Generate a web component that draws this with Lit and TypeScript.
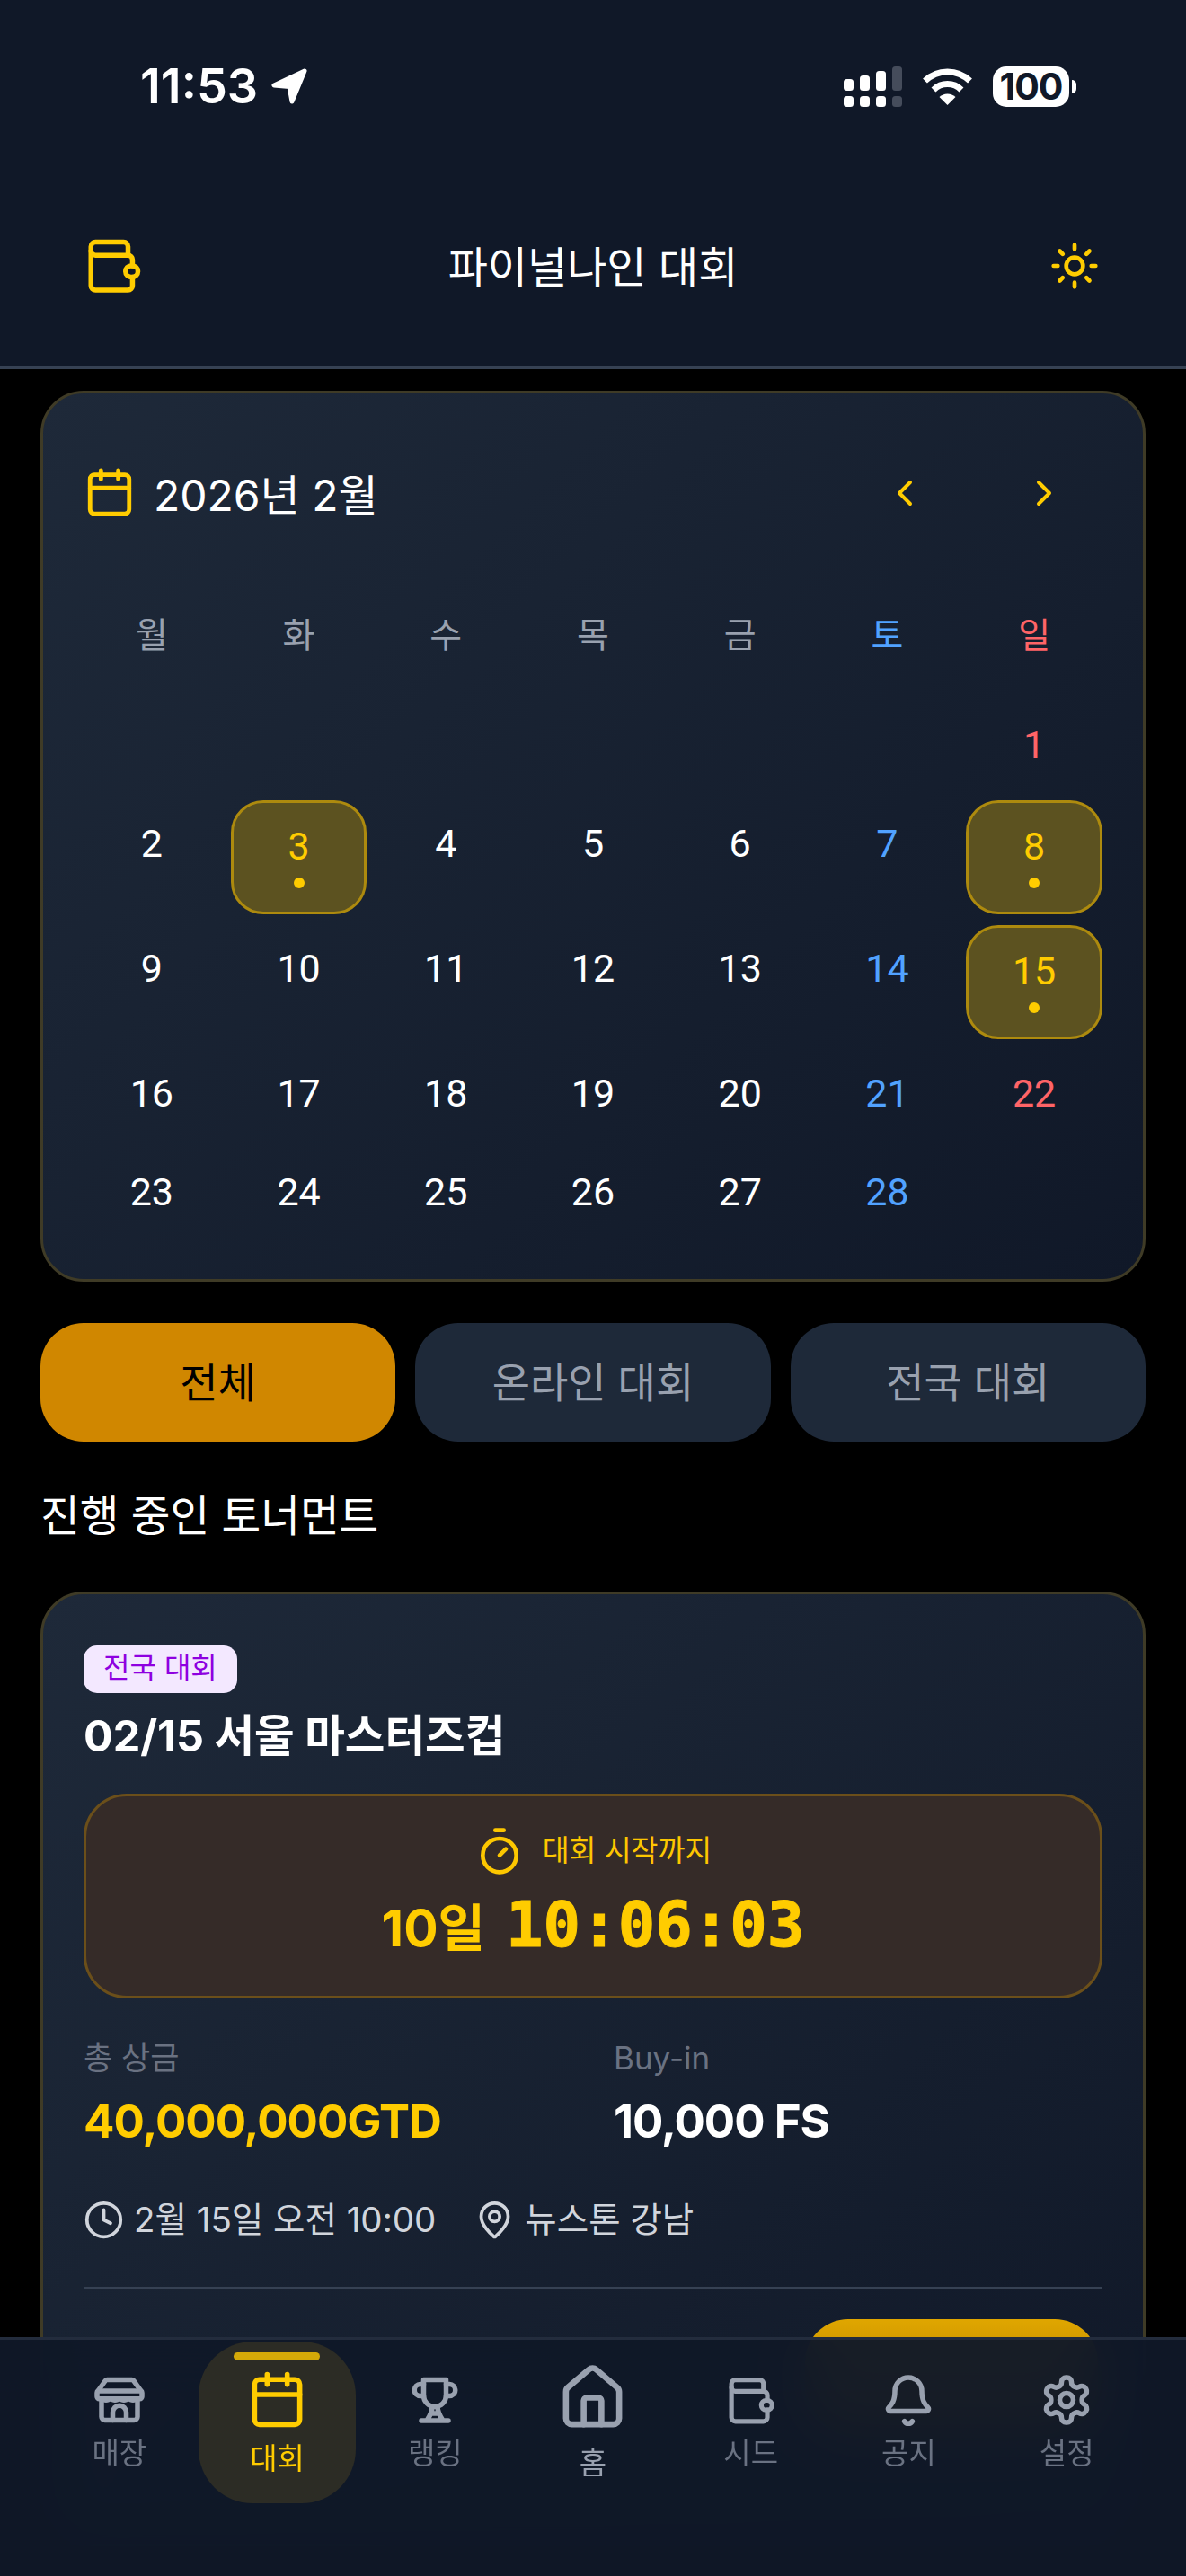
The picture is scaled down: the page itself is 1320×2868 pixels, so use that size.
import {css, html, LitElement, svg, nothing} from 'lit';
import {customElement} from 'lit/decorators.js';

const icon = (size: number, sw: number, body: unknown) => html`
  <svg class="ico" width=${size} height=${size} viewBox="0 0 24 24" fill="none" stroke="currentColor"
    stroke-width=${sw} stroke-linecap="round" stroke-linejoin="round">${body}</svg>`;

const walletPaths = svg`
  <path d="M3 6V20a1.8 1.8 0 0 0 1.8 1.8H18a1.8 1.8 0 0 0 1.8-1.8v-3.5"/>
  <path d="M19.8 12V9.5A1.8 1.8 0 0 0 18 7.7H4.8A1.8 1.8 0 0 1 3 6V4.2A1.8 1.8 0 0 1 4.8 2.4h11.4A1.8 1.8 0 0 1 18 4.2v3.5"/>
  <rect x="17" y="12" width="5" height="4.5" rx="2.2"/>`;
const calendarPaths = svg`
  <path d="M8 2v4M16 2v4M3 10h18"/><rect x="3" y="4" width="18" height="18" rx="2"/>`;
const storePaths = svg`
  <path d="M6.5 3h11a1 1 0 0 1 .8.4L21.6 8a1 1 0 0 1 .4.8V10.5a1 1 0 0 1-1 1H3a1 1 0 0 1-1-1V8.8a1 1 0 0 1 .4-.8L5.7 3.4A1 1 0 0 1 6.5 3z"/>
  <path d="M2.5 8h19"/>
  <path d="M4 11.5a2.6 2.6 0 0 0 4 0a2.6 2.6 0 0 0 4 0a2.6 2.6 0 0 0 4 0a2.6 2.6 0 0 0 4 0" stroke-width="1.6"/>
  <path d="M4 12v7.5A1.5 1.5 0 0 0 5.5 21h13a1.5 1.5 0 0 0 1.5-1.5V12"/>
  <path d="M9 21v-3.5a3 3 0 0 1 6 0V21"/>`;
const trophyPaths = svg`
  <path d="M7 3h10v7a5 5 0 0 1-10 0z"/>
  <path d="M7 5H5.5a2.6 2.6 0 0 0 0 5.2H7M17 5h1.5a2.6 2.6 0 0 1 0 5.2H17"/>
  <path d="M10.8 15c0 2.5-1 4-2.3 6M13.2 15c0 2.5 1 4 2.3 6M6 21.2h12M10.5 18h3"/>`;
const homePaths = svg`
  <path d="M15 21v-8a1 1 0 0 0-1-1h-4a1 1 0 0 0-1 1v8"/>
  <path d="M3 10a2 2 0 0 1 .709-1.528l7-5.999a2 2 0 0 1 2.582 0l7 5.999A2 2 0 0 1 21 10v9a2 2 0 0 1-2 2H5a2 2 0 0 1-2-2z"/>`;
const bellPaths = svg`
  <path d="M10.268 21.5a2 2 0 0 0 3.464 0"/>
  <path d="M3.262 15.326A1 1 0 0 0 4 17h16a1 1 0 0 0 .74-1.673C19.41 13.956 18 12.499 18 8A6 6 0 0 0 6 8c0 4.499-1.411 5.956-2.738 7.326"/>`;
const gearPaths = svg`
  <path d="M12.22 2h-.44a2 2 0 0 0-2 2v.18a2 2 0 0 1-1 1.73l-.43.25a2 2 0 0 1-2 0l-.15-.08a2 2 0 0 0-2.73.73l-.22.38a2 2 0 0 0 .73 2.73l.15.1a2 2 0 0 1 1 1.72v.51a2 2 0 0 1-1 1.74l-.15.09a2 2 0 0 0-.73 2.73l.22.38a2 2 0 0 0 2.73.73l.15-.08a2 2 0 0 1 2 0l.43.25a2 2 0 0 1 1 1.73V20a2 2 0 0 0 2 2h.44a2 2 0 0 0 2-2v-.18a2 2 0 0 1 1-1.73l.43-.25a2 2 0 0 1 2 0l.15.08a2 2 0 0 0 2.73-.73l.22-.39a2 2 0 0 0-.73-2.73l-.15-.08a2 2 0 0 1-1-1.74v-.5a2 2 0 0 1 1-1.74l.15-.09a2 2 0 0 0 .73-2.73l-.22-.38a2 2 0 0 0-2.73-.73l-.15.08a2 2 0 0 1-2 0l-.43-.25a2 2 0 0 1-1-1.73V4a2 2 0 0 0-2-2z"/>
  <circle cx="12" cy="12" r="3"/>`;
const sunPaths = svg`
  <circle cx="12" cy="12" r="4"/>
  <path d="M12 2v2M12 20v2M4.93 4.93l1.41 1.41M17.66 17.66l1.41 1.41M2 12h2M20 12h2M6.34 17.66l-1.41 1.41M19.07 4.93l-1.41 1.41"/>`;

const WEEK = ['월', '화', '수', '목', '금', '토', '일'];
// leading blanks so that the 1st falls on Sunday
const DAYS: (number | null)[] = [null, null, null, null, null, null,
  ...Array.from({length: 28}, (_, i) => i + 1)];
const EVENTS = [3, 8, 15];
const RED = [1, 22];

const NAV = [
  {label: '매장', size: 60, sw: 2.2, body: storePaths, cls: ''},
  {label: '대회', size: 67, sw: 2, body: calendarPaths, cls: 'active'},
  {label: '랭킹', size: 60, sw: 2.2, body: trophyPaths, cls: ''},
  {label: '홈', size: 79, sw: 2, body: homePaths, cls: 'home'},
  {label: '시드', size: 57, sw: 2.2, body: walletPaths, cls: 'seed'},
  {label: '공지', size: 60, sw: 2.2, body: bellPaths, cls: ''},
  {label: '설정', size: 60, sw: 2.2, body: gearPaths, cls: ''},
];

@customElement('app-root')
export class AppRoot extends LitElement {
  static override styles = css`
    :host {
      display: block;
      position: relative;
      width: 1320px;
      height: 2868px;
      overflow: hidden;
      background: #000;
      color: #fff;
      font-family: Inter, "Noto Sans CJK KR", sans-serif;
    }

    .ico { display: block; flex: none; }

    .top {
      height: 408px;
      background: #101828;
      border-bottom: 3px solid #364153;
      display: flex;
      flex-direction: column;
    }

    .status {
      height: 192px;
      display: flex;
      align-items: center;
      padding: 0 122px 0 156px;
      box-sizing: border-box;
      justify-content: space-between;
    }

    .clock {
      display: flex;
      align-items: center;
      gap: 14px;
      font-size: 54px;
      font-weight: 600;
      line-height: 60px;
    }

    .sys { display: flex; align-items: center; gap: 22px; }

    .battery {
      display: flex;
      align-items: center;
      gap: 3px;
    }

    .battery-body {
      width: 85px;
      height: 45px;
      border-radius: 15px;
      background: #fff;
      color: #101828;
      font-size: 41px;
      font-weight: 700;
      line-height: 45px;
      text-align: center;
      letter-spacing: -1px;
    }

    .battery-nub {
      width: 5px;
      height: 15px;
      border-radius: 0 6px 6px 0;
      background: #fff;
    }

    .bar {
      flex: 1;
      display: flex;
      align-items: center;
      justify-content: space-between;
      padding: 0 96px 8px 93px;
      color: #ffcc00;
    }

    .bar h1 {
      margin: 0 7px 4px 0;
      font-size: 48px;
      font-weight: 400;
      color: #fff;
    }

    main {
      padding: 24px 45px 0;
      display: flex;
      flex-direction: column;
    }

    .panel {
      border: 3px solid #3f3b26;
      border-radius: 48px;
      background: linear-gradient(135deg, #1e2939, #101828);
    }

    .cal { padding: 45px 45px 47px; }

    .cal-head {
      height: 130px;
      display: flex;
      align-items: center;
      color: #ffcc00;
    }

    .cal-title {
      flex: 1;
      margin-left: 20px;
      font-size: 48px;
      color: #fff;
    }

    .chev { display: flex; gap: 107px; padding: 2px 41px 0 0; }

    .grid {
      display: grid;
      grid-template-columns: repeat(7, 1fr);
      column-gap: 12px;
      row-gap: 12px;
      align-items: start;
    }

    .week {
      margin: 64px 0 44px;
    }

    .week span {
      text-align: center;
      font-size: 39px;
      line-height: 60px;
      color: #99a1af;
    }

    .sat { color: #51a2ff !important; }
    .sun { color: #ff6467 !important; }

    .day {
      height: 98px;
      box-sizing: border-box;
      padding-top: 24px;
      text-align: center;
      font-size: 43px;
      line-height: 48px;
      font-family: Roboto, sans-serif;
    }

    .day.event {
      height: 127px;
      padding-top: 24px;
      border: 3px solid #ad8a0e;
      border-radius: 36px;
      background: #5c5220;
      color: #ffcc00;
    }

    .dot {
      width: 12px;
      height: 12px;
      margin: 11px auto 0;
      border-radius: 50%;
      background: #ffcc00;
    }

    .tabs {
      margin-top: 46px;
      display: grid;
      grid-template-columns: repeat(3, 1fr);
      gap: 22px;
    }

    .tabs div {
      height: 132px;
      box-sizing: border-box;
      padding-bottom: 6px;
      border-radius: 48px;
      background: #1e2939;
      color: #99a1af;
      font-size: 46px;
      font-weight: 400;
      display: flex;
      align-items: center;
      justify-content: center;
    }

    .tabs .on { background: #d08700; color: #000; }

    h2 {
      margin: 51px 0 52px;
      font-size: 47.5px;
      line-height: 64px;
      font-weight: 400;
    }

    .game { padding: 57px 45px 0; height: 1000px; }

    .tag {
      display: inline-block;
      padding: 0 22px;
      height: 53px;
      line-height: 50px;
      border-radius: 15px;
      background: #f3e8ff;
      color: #8e00e0;
      font-size: 32px;
      font-weight: 400;
      vertical-align: top;
    }

    .name {
      margin: 10px 0 26px;
      font-size: 48.5px;
      line-height: 76px;
      font-weight: 700;
    }

    .count {
      height: 228px;
      box-sizing: border-box;
      border: 3px solid #6b4f1a;
      border-radius: 48px;
      background: #352b28;
      color: #ffcc00;
      display: flex;
      flex-direction: column;
      align-items: center;
      padding-top: 33px;
      gap: 12px;
    }

    .count-top {
      display: flex;
      align-items: center;
      gap: 20px;
      font-size: 32.5px;
      line-height: 56px;
      color: #fdc700;
    }

    .count-time {
      display: flex;
      align-items: baseline;
      gap: 23px;
      font-size: 57px;
      font-weight: 700;
      line-height: 84px;
    }

    .mono {
      font-family: "DejaVu Sans Mono", monospace;
      font-size: 69px;
      -webkit-text-stroke: 1px #ffcc00;
    }

    .facts {
      margin-top: 36px;
      display: grid;
      grid-template-columns: 1fr 1fr;
      column-gap: 46px;
    }

    .facts small {
      display: block;
      font-size: 35px;
      line-height: 60px;
      color: #6a7282;
    }

    .facts b {
      display: block;
      margin-top: 6px;
      font-size: 51px;
      line-height: 70px;
      font-weight: 700;
      letter-spacing: -1px;
    }

    .gold { color: #ffcc00; }

    .meta {
      margin-top: 44px;
      display: flex;
      align-items: center;
      font-size: 38.5px;
      line-height: 60px;
      color: #d1d5dc;
    }

    .meta span { margin: 0 43px 0 11px; }

    hr {
      margin: 45px 0 33px;
      border: 0;
      height: 3px;
      background: #364153;
    }

    .join { display: flex; justify-content: flex-end; padding-right: 5px; }

    .join div {
      width: 326px;
      height: 132px;
      border-radius: 48px;
      background: linear-gradient(#e0a600, #9c7000);
    }

    nav {
      position: absolute;
      left: 0;
      right: 0;
      bottom: 0;
      height: 261px;
      border-top: 3px solid #232c3d;
      background: rgba(16, 24, 40, 0.96);
      backdrop-filter: blur(30px);
      padding: 2px 45px 0;
      display: grid;
      grid-template-columns: repeat(7, 1fr);
      align-items: start;
    }

    .item {
      position: relative;
      height: 180px;
      box-sizing: border-box;
      padding-top: 35px;
      gap: 7px;
      display: flex;
      flex-direction: column;
      align-items: center;
      color: #99a1af;
      font-size: 33px;
      line-height: 44px;
    }

    .item span { color: #6a7282; }

    .item.seed { padding-top: 37px; gap: 8px; }

    .item.home { padding-top: 23px; gap: 11px; }
    .item.home span { color: #99a1af; }

    .item.active {
      padding-top: 31px;
      gap: 10px;
      border-radius: 60px;
      background: #2c2c25;
      color: #ffcc00;
    }

    .item.active span { color: #ffcc00; }

    .item.active::before {
      content: '';
      position: absolute;
      top: 12px;
      left: 39px;
      width: 96px;
      height: 9px;
      border-radius: 5px;
      background: #d4a908;
    }
  `;

  private renderStatus() {
    return html`
      <div class="status">
        <div class="clock">
          <span>11:53</span>
          <svg width="42" height="40" viewBox="0 0 42 40" fill="#fff" stroke="#fff" stroke-width="5" stroke-linejoin="round">
            <path d="M38 3 L4 19 L21 20.5 L24 37 Z"/>
          </svg>
        </div>
        <div class="sys">
          <svg width="65" height="45" viewBox="0 0 65 45" fill="#fff">
            <rect x="0" y="14" width="11" height="13" rx="3.5"/>
            <rect x="18" y="10" width="11" height="17" rx="3.5"/>
            <rect x="36" y="5" width="11" height="22" rx="3.5"/>
            <rect x="54" y="0" width="11" height="27" rx="3.5" fill="#454c5b"/>
            <rect x="0" y="33" width="11" height="12" rx="3.5"/>
            <rect x="18" y="33" width="11" height="12" rx="3.5"/>
            <rect x="36" y="33" width="11" height="12" rx="3.5"/>
            <rect x="54" y="33" width="11" height="12" rx="3.5" fill="#454c5b"/>
          </svg>
          <svg width="57" height="44" viewBox="0 0 57 44" fill="none" stroke="#fff">
            <path d="M3.5 16 A36 36 0 0 1 53.5 16" stroke-width="7"/>
            <path d="M13 26 A22 22 0 0 1 44 26" stroke-width="7"/>
            <path d="M28.5 43 L19.5 34 A13 13 0 0 1 37.5 34 Z" fill="#fff" stroke="none"/>
          </svg>
          <div class="battery">
            <div class="battery-body">100</div>
            <div class="battery-nub"></div>
          </div>
        </div>
      </div>`;
  }

  private renderCalendar() {
    return html`
      <section class="panel cal">
        <div class="cal-head">
          ${icon(58, 2, calendarPaths)}
          <div class="cal-title">2026년 2월</div>
          <div class="chev">
            ${icon(48, 2, svg`<path d="m15 18-6-6 6-6"/>`)}
            ${icon(48, 2, svg`<path d="m9 18 6-6-6-6"/>`)}
          </div>
        </div>
        <div class="grid week">
          ${WEEK.map((w, i) => html`<span class=${i === 5 ? 'sat' : i === 6 ? 'sun' : ''}>${w}</span>`)}
        </div>
        <div class="grid">
          ${DAYS.map((d, i) => {
            if (d === null) return html`<div class="day"></div>`;
            const ev = EVENTS.includes(d);
            const tone = RED.includes(d) ? 'sun' : i % 7 === 5 ? 'sat' : '';
            return html`<div class="day ${ev ? 'event' : tone}">
              ${d}${ev ? html`<div class="dot"></div>` : nothing}
            </div>`;
          })}
        </div>
      </section>`;
  }

  private renderGame() {
    return html`
      <section class="panel game">
        <div class="tag">전국 대회</div>
        <div class="name">02/15 서울 마스터즈컵</div>
        <div class="count">
          <div class="count-top">
            ${icon(56, 2, svg`<path d="M10 2h4M12 14l3-3"/><circle cx="12" cy="14" r="8"/>`)}
            <span>대회 시작까지</span>
          </div>
          <div class="count-time"><span>10일</span><span class="mono">10:06:03</span></div>
        </div>
        <div class="facts">
          <div><small>총 상금</small><b class="gold">40,000,000GTD</b></div>
          <div><small>Buy-in</small><b>10,000 FS</b></div>
        </div>
        <div class="meta">
          ${icon(45, 2, svg`<circle cx="12" cy="12" r="10"/><path d="M12 6v6l4 2"/>`)}
          <span>2월 15일 오전 10:00</span>
          ${icon(45, 2, svg`<path d="M20 10c0 5-5.5 10.2-7.4 11.8a1 1 0 0 1-1.2 0C9.5 20.2 4 15 4 10a8 8 0 0 1 16 0"/><circle cx="12" cy="10" r="3"/>`)}
          <span>뉴스톤 강남</span>
        </div>
        <hr />
        <div class="join"><div></div></div>
      </section>`;
  }

  override render() {
    return html`
      <header class="top">
        ${this.renderStatus()}
        <div class="bar">
          ${icon(66, 2, walletPaths)}
          <h1>파이널나인 대회</h1>
          ${icon(56, 2, sunPaths)}
        </div>
      </header>
      <main>
        ${this.renderCalendar()}
        <div class="tabs">
          <div class="on">전체</div>
          <div>온라인 대회</div>
          <div>전국 대회</div>
        </div>
        <h2>진행 중인 토너먼트</h2>
        ${this.renderGame()}
      </main>
      <nav>
        ${NAV.map(n => html`
          <div class="item ${n.cls}">
            ${icon(n.size, n.sw, n.body)}
            <span>${n.label}</span>
          </div>`)}
      </nav>
    `;
  }
}

declare global {
  interface HTMLElementTagNameMap {
    'app-root': AppRoot;
  }
}
